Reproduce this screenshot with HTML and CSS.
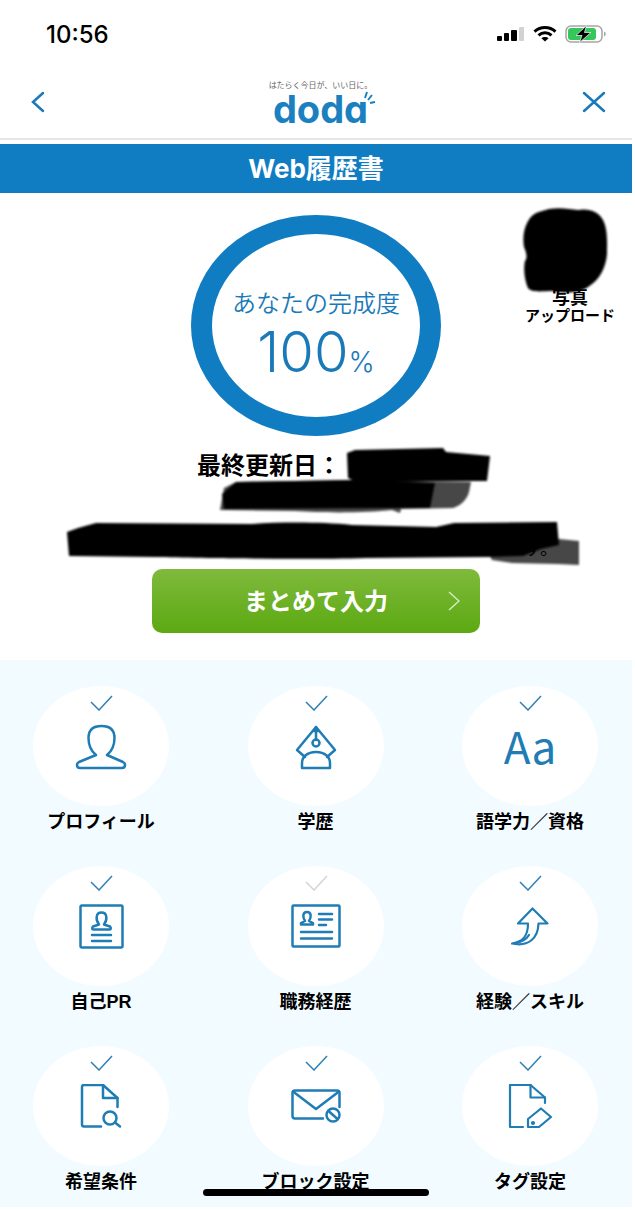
FILE: index.html
```
<!DOCTYPE html>
<html lang="ja">
<head>
<meta charset="utf-8">
<meta name="viewport" content="width=device-width, initial-scale=1">
<title>Web履歴書 | doda</title>
<link rel="stylesheet" href="styles.css">
</head>
<body>
  <div class="app">
    <div class="status">
      <span class="time">10:56</span>
      <div class="status_icons">
        <svg width="28" height="16" viewBox="0 0 28 16">
          <rect x="0" y="10" width="5" height="5" rx="1"/>
          <rect x="7" y="7" width="5" height="8" rx="1"/>
          <rect x="14" y="4" width="6" height="11" rx="1"/>
          <rect x="22" y="1" width="5" height="14" rx="1" fill="#d2d2d2"/>
        </svg>
        <svg width="24" height="16" viewBox="0 0 24 16" fill="none" stroke="#000" stroke-width="3">
          <path d="M1.5 5.6C7.5 .2 16.5 .2 22.5 5.6"/>
          <path d="M5.5 9.3C9.3 6 14.7 6 18.5 9.3"/>
          <path d="M12 15.5L8.4 12.3C10.3 10.7 13.7 10.7 15.6 12.3Z" fill="#000" stroke="none"/>
        </svg>
        <svg width="42" height="18" viewBox="0 0 42 18">
          <rect x="1" y="1" width="36" height="16" rx="5" fill="#fff" stroke="#a5a5a5" stroke-width="1.5"/>
          <rect x="3" y="3" width="28" height="12" rx="3" fill="#35c759"/>
          <path d="M39 6.5C41.3 7.5 41.3 10.5 39 11.5Z" fill="#a5a5a5"/>
          <path d="M21.500 .5L11 10.500H17L14.500 17.500L26 7.500H19.500Z" stroke="#fff" stroke-width=".7"/>
        </svg>
      </div>
    </div>

    <header class="header">
      <button type="button" class="icon_button" aria-label="戻る">
        <svg width="14" height="22" viewBox="0 0 14 22"><path d="M12 2L2 11L12 20"/></svg>
      </button>
      <a href="#" class="logo">
        <span class="tagline">はたらく今日が、いい日に。</span>
        <span class="logo_name">doda
          <svg class="spark" width="12" height="15" viewBox="0 0 12 15"><path d="M3 1L1 7M8 4L4 9M11 11L6 12"/></svg>
        </span>
      </a>
      <button type="button" class="icon_button" aria-label="閉じる">
        <svg width="24" height="22" viewBox="0 0 24 22"><path d="M2 2L22 20M22 2L2 20"/></svg>
      </button>
    </header>

    <h1 class="title">Web履歴書</h1>

    <main>
      <section class="summary">
        <div class="top">
          <div class="ring">
            <span class="ring_label">あなたの完成度</span>
            <span class="ring_value">100<small>%</small></span>
          </div>
          <button type="button" class="photo">
            <svg width="92" height="92" viewBox="0 0 92 92">
              <defs><filter id="soft"><feGaussianBlur stdDeviation="1.2"/></filter></defs>
              <path filter="url(#soft)" d="M6 13C11 7 18 6 25 4C36 2 46 4 54 5C65 3 75 7 79 15C84 25 83 37 83 49C82 61 77 74 64 82C55 89 35 88 29 86C18 86 8 88 4 83C1 76 -1 64 1 56C4 52 2 47 0 42C-2 30 1 20 6 13Z"/>
            </svg>
            <span class="photo_title">写真</span>
            <span>アップロード</span>
          </button>
        </div>

        <div class="update">
          <p class="update_date">最終更新日：</p>
          <p class="update_note">す。</p>
          <svg class="marker" viewBox="0 0 528 121">
            <g filter="url(#soft)">
              <path d="M295 5L303 2L391 0L394 4L438 8L435 33L378 33L307 35L296 30Z"/>
              <path d="M184 34L300 32L419 34L417 44C415 52 408 58 401 60L349 61L348 65L340 62C315 65 270 65 243 63L168 62L172 40Z" fill-opacity=".72"/>
              <path d="M184 34L300 32L383 35L378 60L340 60L172 61L170 46Z"/>
              <path d="M15 84L26 80L44 75L200 76C230 74 270 74 300 77L384 79L402 75L505 74L507 97L489 101L471 108L436 109L314 110C250 112 150 110 103 109L17 108Z"/>
              <path d="M436 105L480 97L507 91L527 93L527 117L505 116L460 115L440 112Z" fill-opacity=".72"/>
            </g>
          </svg>
        </div>

        <button type="button" class="enter">
          <span>まとめて入力</span>
          <svg width="12" height="20" viewBox="0 0 12 20"><path d="M1 1L11 10L1 19"/></svg>
        </button>
      </section>

      <nav class="menu">
        <a href="#" class="item">
          <span class="circle">
            <svg class="check" viewBox="0 0 24 16"><path d="M2 7L10 15L23 1"/></svg>
            <svg class="icon" viewBox="0 0 52 48">
              <path d="M21 31C16 27 13.5 21 13.5 14C13.5 6 18 2 26.5 2C35 2 39.5 6 39.5 14C39.5 21 37 27 32 31L48 38Q50 39 50 41Q50 44 47 44H5Q2 44 2 41Q2 39 4 38Z"/>
            </svg>
          </span>
          <span class="label">プロフィール</span>
        </a>
        <a href="#" class="item">
          <span class="circle">
            <svg class="check" viewBox="0 0 24 16"><path d="M2 7L10 15L23 1"/></svg>
            <svg class="icon" viewBox="0 0 52 48">
              <path d="M15 33L7 26L26 3L45 26L37 33"/>
              <path d="M26 4V16"/>
              <path d="M24 7L26 3L28 7Z"/>
              <circle cx="26" cy="19" r="3.5"/>
              <path d="M12 44V39C12 33 17 28 26 28C35 28 40 33 40 39V44Z"/>
            </svg>
          </span>
          <span class="label">学歴</span>
        </a>
        <a href="#" class="item">
          <span class="circle">
            <svg class="check" viewBox="0 0 24 16"><path d="M2 7L10 15L23 1"/></svg>
            <span class="letters">Aa</span>
          </span>
          <span class="label">語学力／資格</span>
        </a>
        <a href="#" class="item">
          <span class="circle">
            <svg class="check" viewBox="0 0 24 16"><path d="M2 7L10 15L23 1"/></svg>
            <svg class="icon" viewBox="0 0 52 48">
              <rect x="5.5" y="1.5" width="42" height="42" rx="1.5"/>
              <path d="M24 20.5C20.5 16 20.5 8.5 26.5 8.5C32.5 8.5 32.5 16 29 20.5L35 22.5Q37 25.5 34 25.5H19Q16 25.5 18 22.5Z"/>
              <path d="M17 31H36M17 37H36"/>
            </svg>
          </span>
          <span class="label">自己PR</span>
        </a>
        <a href="#" class="item">
          <span class="circle">
            <svg class="check check_off" viewBox="0 0 24 16"><path d="M2 7L10 15L23 1"/></svg>
            <svg class="icon" viewBox="0 0 52 48">
              <rect x="2.5" y="1.5" width="47" height="41" rx="1"/>
              <path d="M15 17C12.5 13 12.5 8 17 8C21.5 8 21.5 13 19 17L23 19V20.5H11V19Z"/>
              <path d="M29 10H42M29 15.5H42M29 21H36M11 28H42M11 34.5H42"/>
            </svg>
          </span>
          <span class="label">職務経歴</span>
        </a>
        <a href="#" class="item">
          <span class="circle">
            <svg class="check" viewBox="0 0 24 16"><path d="M2 7L10 15L23 1"/></svg>
            <svg class="icon icon_thin" viewBox="0 0 52 48">
              <path d="M28.5 4.5L14 19.5H24C24 31 20 38 8 39.5C25 43 34 34 34.5 19.5H43.500Z"/>
              <path d="M11 39.5C18 38 22 36 25 31"/>
            </svg>
          </span>
          <span class="label">経験／スキル</span>
        </a>
        <a href="#" class="item">
          <span class="circle">
            <svg class="check" viewBox="0 0 24 16"><path d="M2 7L10 15L23 1"/></svg>
            <svg class="icon" viewBox="0 0 52 48">
              <path d="M26 42.5H9Q7 42.5 7 40.5V3Q7 1 9 1H28L42.5 14V23"/>
              <path d="M28 1V14H42.5"/>
              <circle cx="35" cy="34" r="6.5"/>
              <path d="M40 38.5L45 42.5"/>
            </svg>
          </span>
          <span class="label">希望条件</span>
        </a>
        <a href="#" class="item">
          <span class="circle">
            <svg class="check" viewBox="0 0 24 16"><path d="M2 7L10 15L23 1"/></svg>
            <svg class="icon" viewBox="0 0 52 48">
              <path d="M33 34.5H5Q2.5 34.5 2.5 32V9Q2.5 6.5 5 6.5H47Q49.5 6.5 49.5 9V23"/>
              <path d="M3 7.5L26 25L49 7.5"/>
              <circle cx="43" cy="31" r="6.5"/>
              <path d="M38.5 27L47.5 35"/>
            </svg>
          </span>
          <span class="label">ブロック設定</span>
        </a>
        <a href="#" class="item">
          <span class="circle">
            <svg class="check" viewBox="0 0 24 16"><path d="M2 7L10 15L23 1"/></svg>
            <svg class="icon icon_thin" viewBox="0 0 52 48">
              <path d="M19 43H6V1H26.5L41 13.5V19"/>
              <path d="M26.5 1V13.5H41"/>
              <path d="M24 43V35L37 24.5L47 33L35 43Z"/>
              <circle cx="29" cy="39" r="1"/>
            </svg>
          </span>
          <span class="label">タグ設定</span>
        </a>
      </nav>
    </main>
  </div>
  <div class="home_bar"></div>
</body>
</html>
```
FILE: styles.css
```
* {
  box-sizing: border-box;
}

body {
  margin: 0;
  background: #fff;
  color: #000;
  font-family: Inter, "Noto Sans CJK JP", sans-serif;
}

button {
  padding: 0;
  border: none;
  background: none;
  color: inherit;
  font-family: inherit;
  cursor: pointer;
}

a {
  color: inherit;
  text-decoration: none;
}

p {
  margin: 0;
}

svg {
  display: block;
}

.app {
  margin-right: 3px;
}

/* status bar */
.status {
  display: flex;
  justify-content: space-between;
  align-items: center;
  height: 68px;
  padding: 0 25px 0 46px;
}

.time {
  font-size: 24px;
  font-weight: 500;
}

.status_icons {
  display: flex;
  align-items: center;
  gap: 8px;
}

/* header */
.header {
  display: flex;
  justify-content: space-between;
  align-items: center;
  height: 72px;
  padding: 0 26px 2px 31px;
  border-bottom: 2px solid #e6e6e6;
}

.icon_button svg {
  fill: none;
  stroke: #1a7ab8;
  stroke-width: 2.5;
  stroke-linecap: round;
}

.logo {
  display: flex;
  flex-direction: column;
  align-items: center;
  padding: 4px 0 0 14px;
}

.tagline {
  color: #666;
  font-size: 8px;
  line-height: 10px;
}

.logo_name {
  position: relative;
  color: #1a80c0;
  font-size: 38px;
  font-weight: 700;
  line-height: 38px;
  font-feature-settings: "cv11";
}

.spark {
  position: absolute;
  top: 1px;
  right: -8px;
  fill: none;
  stroke: #1a80c0;
  stroke-width: 2;
}

.title {
  margin: 4px 0 0;
  background: #107dc3;
  color: #fff;
  font-size: 26px;
  font-weight: 700;
  line-height: 49px;
  text-align: center;
}

/* completion */
.summary {
  display: flex;
  flex-direction: column;
  align-items: center;
  padding: 12px 0 27px;
}

.top {
  display: grid;
  grid-template-columns: 1fr auto 1fr;
  align-self: stretch;
}

.ring {
  grid-column: 2;
  display: flex;
  flex-direction: column;
  align-items: center;
  width: 250px;
  height: 221px;
  margin-top: 10px;
  padding-top: 52px;
  border: solid #107dc3;
  border-width: 19px 21px;
  border-radius: 50%;
  color: #1a7ab8;
}

.ring_label {
  font-size: 24px;
  font-weight: 350;
  line-height: 36px;
}

.ring_value {
  font-size: 56px;
  font-weight: 300;
  line-height: 60px;
}

.ring_value small {
  font-size: 28px;
}

.photo {
  display: flex;
  flex-direction: column;
  align-items: center;
  justify-self: end;
  align-self: start;
  margin-right: 16px;
  font-size: 15px;
  font-weight: 700;
  line-height: 17px;
}

.photo svg {
  overflow: visible;
}

.photo_title {
  margin-top: -8px;
  font-size: 18px;
  line-height: 18px;
}

.update {
  position: relative;
  width: 528px;
  max-width: 100%;
  height: 121px;
  margin-top: 12px;
}

.update_date {
  padding-left: 145px;
  font-size: 24px;
  font-weight: 700;
  line-height: 36px;
}

.update_note {
  margin-top: 49px;
  padding-right: 22px;
  font-size: 18px;
  line-height: 32px;
  text-align: right;
}

.marker {
  position: absolute;
  top: 0;
  left: 0;
  width: 100%;
  overflow: visible;
}

.enter {
  display: grid;
  grid-template-columns: 1fr auto 1fr;
  align-items: center;
  width: 328px;
  height: 64px;
  padding: 0 20px;
  border-radius: 10px;
  background: linear-gradient(#7fba3c, #5ca912);
  color: #fff;
  font-size: 24px;
  font-weight: 700;
}

.enter span {
  grid-column: 2;
  padding-bottom: 4px;
}

.enter svg {
  justify-self: end;
  fill: none;
  stroke: #d5ebbd;
  stroke-width: 1.5;
}

/* menu */
.menu {
  display: grid;
  grid-template-columns: repeat(3, 136px);
  justify-content: space-between;
  row-gap: 28px;
  padding: 26px 34px 9px 33px;
  background: #f2fbff;
}

.item {
  display: flex;
  flex-direction: column;
  align-items: center;
}

.circle {
  display: flex;
  flex-direction: column;
  align-items: center;
  width: 136px;
  height: 120px;
  padding-top: 9px;
  border-radius: 50%;
  background: #fff;
}

.check {
  width: 24px;
  height: 16px;
  fill: none;
  stroke: #3080b8;
  stroke-width: 1.5;
}

.check_off {
  stroke: #d4d4d4;
}

.icon {
  width: 52px;
  height: 48px;
  margin-top: 13px;
  fill: none;
  stroke: #1f7cb5;
  stroke-width: 2.5;
  stroke-linecap: round;
  stroke-linejoin: round;
}

.icon_thin {
  stroke-width: 2.2;
}

.letters {
  margin-top: 10px;
  color: #1f7cb5;
  font-family: "Noto Sans CJK JP", sans-serif;
  font-size: 44px;
  line-height: 48px;
}

.label {
  font-family: "Liberation Sans", "Noto Sans CJK JP", sans-serif;
  font-size: 18px;
  font-weight: 700;
  line-height: 32px;
  white-space: nowrap;
}

.home_bar {
  position: fixed;
  bottom: 14px;
  left: 50%;
  width: 226px;
  height: 7px;
  margin-left: -115px;
  border-radius: 4px;
  background: #000;
}
```
